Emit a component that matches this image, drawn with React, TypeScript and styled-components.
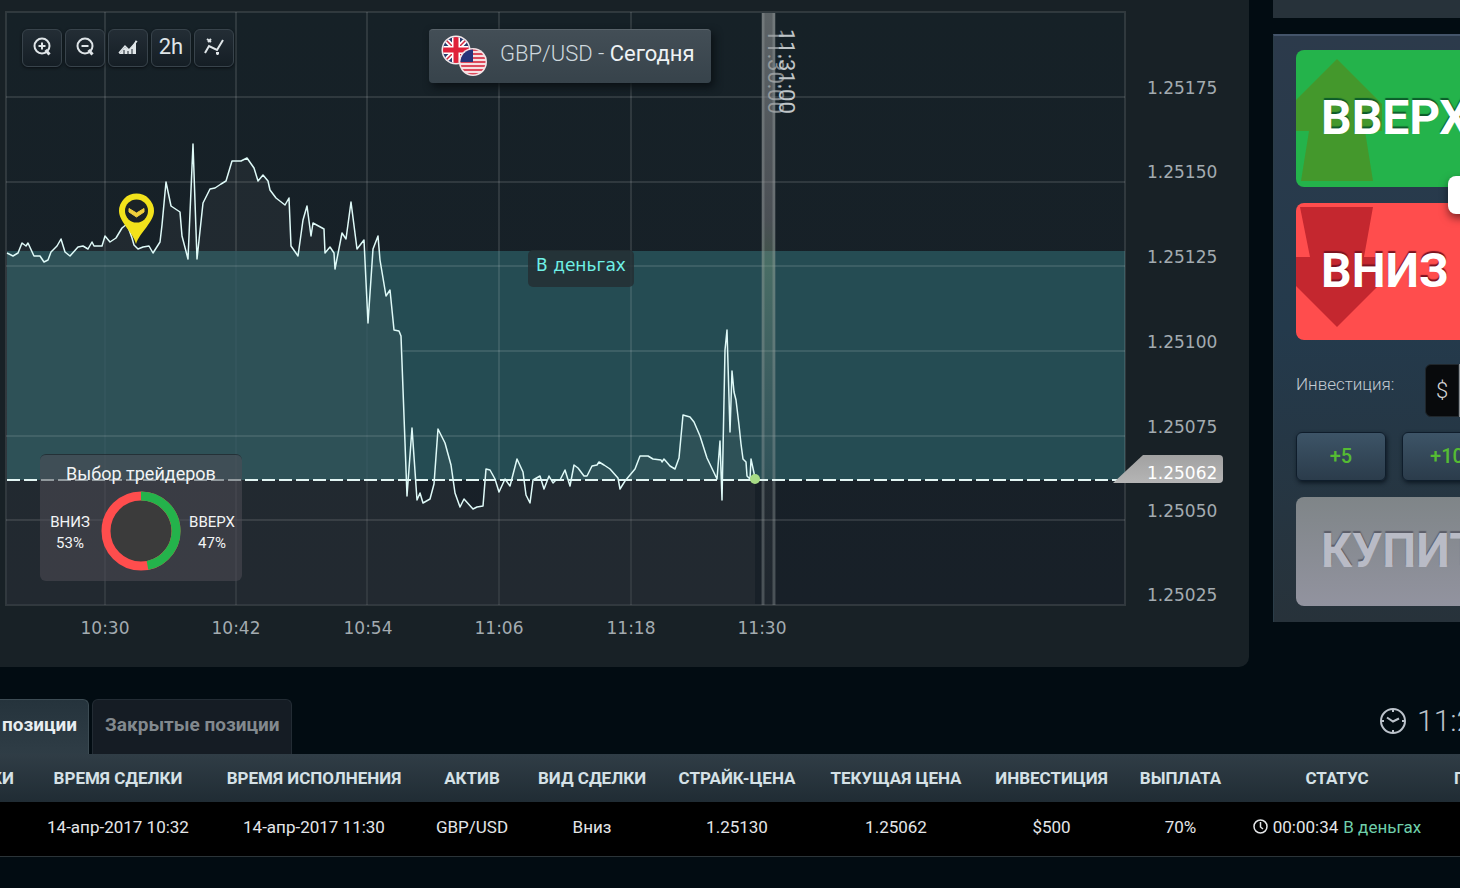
import React from "react";
import styled, { createGlobalStyle, css } from "styled-components";

const GlobalStyle = createGlobalStyle`
  *, *::before, *::after { box-sizing: border-box; }
  body {
    margin: 0;
    background: #020c12;
    color: #e6eaec;
    font-family: Roboto, "Liberation Sans", sans-serif;
    overflow-x: hidden;
  }
  button, input { font: inherit; color: inherit; }
`;

const Page = styled.div`
  min-height: 100vh;
  overflow: hidden;
`;

const TopArea = styled.div`
  display: flex;
  align-items: flex-start;
  gap: 24px;
`;

const ChartPanel = styled.section`
  position: relative;
  flex: 1;
  min-width: 0;
  background: #182126;
  border-radius: 0 0 10px 0;
`;

const ChartSvg = styled.svg`
  display: block;
  width: 100%;
  height: auto;
`;

const Toolbar = styled.div`
  position: absolute;
  top: 29px;
  left: 22px;
  display: flex;
  gap: 3px;
`;

const ToolButton = styled.button`
  display: flex;
  align-items: center;
  justify-content: center;
  width: 40px;
  height: 38px;
  padding: 0 0 2px;
  border: 1px solid #38434b;
  border-radius: 6px;
  background: linear-gradient(#232d35, #151e25);
  box-shadow: 0 1px 3px #0a0f13;
  color: #dfe5e8;
  font-size: 22px;
  line-height: 24px;
`;

const AssetTitle = styled.h1`
  position: absolute;
  top: 29px;
  left: 429px;
  display: flex;
  align-items: center;
  gap: 11px;
  height: 54px;
  margin: 0;
  padding: 0 16px 4px 12px;
  border-radius: 4px;
  border-top: 1px solid #59636a;
  background: linear-gradient(#434e56, #37434b);
  box-shadow: 3px 4px 8px #0a1014;
  font-size: 22px;
  line-height: 26px;
  font-weight: 400;
  color: #eef2f4;
  white-space: nowrap;
`;

const AssetText = styled.span`
  padding-bottom: 2px;
`;

const AssetPair = styled.span`
  font-weight: 300;
  color: #ced8de;
`;

const TradersCard = styled.section`
  position: absolute;
  top: 454px;
  left: 40px;
  width: 202px;
  height: 127px;
  padding: 8px 5px;
  border-radius: 6px;
  background: rgba(78, 76, 86, 0.55);
  border-top: 1px solid rgba(10, 20, 25, 0.5);
  color: #f2f4f5;
  text-align: center;
`;

const CardTitle = styled.h2`
  margin: 0;
  font-size: 18px;
  line-height: 22px;
  font-weight: 400;
`;

const TradersRow = styled.div`
  display: flex;
  align-items: center;
  justify-content: space-between;
  margin-top: 6px;
`;

const Share = styled.div`
  width: 50px;
  padding-top: 4px;
  font-size: 15px;
  line-height: 21px;
  text-align: center;
`;

const Sidebar = styled.aside`
  flex: 0 0 187px;
  overflow: hidden;
`;

const PanelStub = styled.div`
  width: 320px;
  height: 18px;
  margin-bottom: 16px;
  background: #27323a;
`;

const TradePanel = styled.form`
  position: relative;
  display: flex;
  flex-direction: column;
  gap: 16px;
  width: 320px;
  padding: 14px 22px 16px;
  border-top: 2px solid #44546a;
  border-left: 1px solid #2b3d48;
  background: linear-gradient(#2c3a4b, #243a4c 50%, #27323a);
`;

const BigButton = styled.button<{ $kind: "up" | "down" | "buy" }>`
  position: relative;
  overflow: hidden;
  width: 100%;
  height: 137px;
  padding: 0 0 1px 25px;
  border: 0;
  border-radius: 8px;
  text-align: left;
  font-size: 48px;
  line-height: 56px;
  font-weight: 700;
  color: #fff;
  ${(p) =>
    p.$kind === "up" &&
    css`
      background: #24b34b;
      text-shadow: 0 -2px 1px #0c5a2a;
    `}
  ${(p) =>
    p.$kind === "down" &&
    css`
      background: #ff4d4d;
      text-shadow: 0 -2px 1px #7a1220;
    `}
  ${(p) =>
    p.$kind === "buy" &&
    css`
      height: 109px;
      background: linear-gradient(#7f8588, #92939f);
      color: #b9bbc6;
      text-shadow: 0 -2px 1px #5b5d68;
    `}
`;

const ArrowArt = styled.svg`
  position: absolute;
  top: 0;
  left: 0;
`;

const ButtonLabel = styled.span`
  position: relative;
`;

const FloatingBadge = styled.span`
  position: absolute;
  top: 140px;
  left: 174px;
  width: 40px;
  height: 38px;
  border-radius: 8px;
  background: #fff;
  box-shadow: 0 4px 8px rgba(0, 0, 0, 0.5);
`;

const InvestRow = styled.div`
  display: flex;
  height: 53px;
  margin-top: 8px;
`;

const InvestLabel = styled.label`
  flex: 0 0 129px;
  padding-top: 9px;
  font-size: 17px;
  line-height: 22px;
  font-weight: 300;
  color: #c3cbd2;
`;

const Currency = styled.span`
  display: flex;
  align-items: center;
  justify-content: center;
  width: 34px;
  border-radius: 6px 0 0 6px;
  border: 1px solid #20272c;
  background: #080a0c;
  font-size: 22px;
  font-weight: 300;
  color: #d5d5d5;
`;

const AmountInput = styled.input`
  flex: 1;
  min-width: 0;
  padding: 0 8px;
  border: 0;
  border-radius: 0 6px 6px 0;
  background: #8b8f92;
`;

const StepRow = styled.div`
  display: flex;
  gap: 16px;
  margin-top: -1px;
`;

const StepButton = styled.button`
  width: 90px;
  height: 49px;
  padding: 0 0 2px;
  border: 1px solid #0f1d2b;
  border-radius: 6px;
  background: linear-gradient(#3d5467, #2b3c4b);
  box-shadow: 1px 2px 4px #0d1822;
  font-size: 20px;
  line-height: 24px;
  font-weight: 500;
  color: #55bb33;
`;

const Positions = styled.section`
  margin-top: 32px;
`;

const TabBar = styled.div`
  display: flex;
  align-items: flex-start;
  gap: 3px;
`;

const Tab = styled.button<{ $active?: boolean; $cut?: boolean }>`
  height: 55px;
  padding: 0 11px 5px ${(p) => (p.$cut ? "2px" : "12px")};
  border: 1px solid ${(p) => (p.$active ? "#3d4c54" : "#232c34")};
  border-width: 1px 1px 0 ${(p) => (p.$cut ? "0" : "1px")};
  border-radius: ${(p) => (p.$cut ? "0 6px 0 0" : "6px 6px 0 0")};
  background: ${(p) => (p.$active ? "linear-gradient(#25333c, #2f3d46)" : "#151c24")};
  color: ${(p) => (p.$active ? "#e8edf0" : "#82898e")};
  font-size: 19px;
  line-height: 24px;
  font-weight: 700;
  white-space: nowrap;
`;

const Clock = styled.time`
  display: flex;
  align-items: center;
  gap: 11px;
  width: 80px;
  height: 44px;
  margin-left: auto;
  overflow: hidden;
  font-size: 30px;
  line-height: 36px;
  font-weight: 300;
  color: #bcc3cb;
  white-space: nowrap;

  svg { flex: none; }
`;

const PositionsTable = styled.table`
  width: 100%;
  table-layout: fixed;
  border-collapse: collapse;
  text-align: center;
  white-space: nowrap;

  thead tr {
    height: 48px;
    background: linear-gradient(#303d46, #202c34);
  }
  tbody tr {
    height: 54px;
    background: #000;
    border-bottom: 1px solid #2b3438;
  }
  th, td { padding: 0; overflow: hidden; }
  th {
    font-size: 17px;
    line-height: 20px;
    font-weight: 700;
    color: #d5e1e6;
  }
  th:first-child {
    direction: rtl;
    text-align: right;
  }
  th:last-child { text-align: left; padding-left: 2px; }
  td {
    padding-bottom: 4px;
    font-size: 17px;
    line-height: 20px;
    color: #e4e6e8;
  }
`;

const Status = styled.span`
  display: inline-flex;
  align-items: center;
  gap: 5px;
  vertical-align: bottom;
`;

const InMoney = styled.span`
  color: #6fcfab;
`;

const gridX = [105, 236, 367, 499, 631];
const gridY = [97, 182, 266, 351, 436, 520];
const priceLabels: [string, number][] = [
  ["1.25175", 94],
  ["1.25150", 178],
  ["1.25125", 263],
  ["1.25100", 348],
  ["1.25075", 433],
  ["1.25050", 517],
  ["1.25025", 601],
];
const timeLabels: [string, number][] = [
  ["10:30", 105],
  ["10:42", 236],
  ["10:54", 368],
  ["11:06", 499],
  ["11:18", 631],
  ["11:30", 762],
];

const quotes =
  "7,253 13,256 18,253 22,243 26,246 28,243 34,256 40,256 44,262 48,260 51,252 57,246 61,239 65,252 70,256 78,247 83,246 88,249 92,242 94,246 102,246 105,236 110,242 116,238 122,228 127,224 132,238 134,245 138,249 143,247 149,246 153,253 160,242 162,225 166,182 171,206 180,212 182,236 188,259 193,144 197,259 203,203 210,189 215,188 221,184 226,181 232,161 241,161 247,158 254,168 258,181 263,175 268,181 270,190 276,198 285,205 289,198 291,246 298,256 303,220 307,206 311,236 313,223 324,229 325,253 330,247 334,253 335,269 342,233 346,239 351,202 357,249 364,240 368,323 373,249 378,236 380,260 386,296 390,290 394,330 399,331 401,336 407,496 412,428 417,500 420,493 423,503 430,499 434,484 438,429 445,443 451,465 455,493 460,507 464,499 473,509 477,507 483,506 486,469 490,470 495,479 499,492 505,479 510,486 517,459 523,472 526,495 530,503 533,480 540,476 544,489 549,476 553,483 556,480 560,480 565,470 570,486 574,465 578,468 584,476 587,476 592,466 597,465 599,462 604,465 610,469 618,478 620,489 625,481 635,469 640,456 648,456 653,459 661,460 662,462 664,459 670,466 675,469 679,458 683,415 690,417 694,422 700,436 707,458 717,479 720,441 722,500 725,350 727,330 730,432 732,371 734,392 736,400 739,425 741,444 743,459 746,462 747,476 750,479 751,459 754,473 755,479";

function PriceChart() {
  return (
    <ChartSvg viewBox="0 0 1249 667" role="img" aria-label="GBP/USD">
      <defs>
        <linearGradient id="expiryFill" x1="0" y1="0" x2="0" y2="1">
          <stop offset="0" stopColor="#8b8f90" stopOpacity="0.6" />
          <stop offset="0.35" stopColor="#8b8a8e" stopOpacity="0.45" />
          <stop offset="0.42" stopColor="#7fa080" stopOpacity="0.4" />
          <stop offset="0.8" stopColor="#8b8f90" stopOpacity="0.1" />
          <stop offset="1" stopColor="#8b8f90" stopOpacity="0.06" />
        </linearGradient>
        <linearGradient id="plotFill" x1="0" y1="0" x2="0" y2="1">
          <stop offset="0" stopColor="#162127" />
          <stop offset="1" stopColor="#182028" />
        </linearGradient>
        <linearGradient id="tagFill" x1="0" y1="0" x2="0" y2="1">
          <stop offset="0" stopColor="#a1a1a1" />
          <stop offset="1" stopColor="#b5b5b5" />
        </linearGradient>
      </defs>
      <rect x="6" y="12" width="1119" height="593" fill="url(#plotFill)" />
      <rect x="7" y="251" width="1118" height="229" fill="#254c53" />
      <g stroke="#ffffff" strokeOpacity="0.11" strokeWidth="2">
        {gridX.map((x) => (
          <line key={x} x1={x} x2={x} y1="12" y2="251" />
        ))}
        {gridX.map((x) => (
          <line key={x} x1={x} x2={x} y1="480" y2="605" strokeOpacity="0.08" />
        ))}
        {gridX.map((x) => (
          <line key={x} x1={x} x2={x} y1="251" y2="480" strokeOpacity={x < 400 ? 0.03 : 0.1} />
        ))}
        {gridY.map((y) => (
          <line key={y} x1={y === 351 ? 403 : 6} x2="1125" y1={y} y2={y} />
        ))}
        <rect x="6" y="12" width="1119" height="593" fill="none" />
      </g>
      <polygon points={`7,604 ${quotes} 755,604`} fill="#7c7c84" fillOpacity="0.1" />
      <rect x="762" y="13" width="13" height="592" fill="url(#expiryFill)" />
      <path d="M763 13V605M774 13V605" stroke="#9aa2a4" strokeOpacity="0.35" strokeWidth="3" />
      <g fontFamily="Roboto, sans-serif" fontSize="22">
        <text transform="translate(768 29) rotate(90)" fill="#a9adaf" fillOpacity="0.75">11:30:00</text>
        <text transform="translate(779 29) rotate(90)" fill="#c0c6c9">11:31:00</text>
      </g>
      <line x1="7" x2="1120" y1="480" y2="480" stroke="#e2f5f3" strokeWidth="2" strokeDasharray="13 4" />
      <polyline points={quotes} fill="none" stroke="#dffaf8" strokeWidth="1.5" strokeLinejoin="round" />
      <circle cx="755" cy="479" r="5" fill="#a8dc86" />
      <path d="M136 244C133 232 119 222 119 211a17.500 17.500 0 0 1 35 0C154 222 140 232 136 244Z" fill="#f2e21b" />
      <circle cx="136.500" cy="211" r="11.500" fill="#1b2226" />
      <path d="M129 208.500l7.500 4.500 7.500-4.500v3.500l-7.500 5-7.500-5Z" fill="#f0cf3c" stroke="#f0cf3c" strokeLinejoin="round" />
      <rect x="528" y="250" width="106" height="37" rx="5" fill="#252f34" fillOpacity="0.85" />
      <text x="581" y="271" textAnchor="middle" fontFamily="'DejaVu Sans', sans-serif" fontSize="17" fill="#6ff0e6">В деньгах</text>
      <path d="M1113 483L1143 455H1219a4 4 0 0 1 4 4V479a4 4 0 0 1-4 4Z" fill="url(#tagFill)" />
      <g fontFamily="'DejaVu Sans', sans-serif" fontSize="17" fill="#a3abb0">
        {priceLabels.map(([label, y]) => (
          <text key={label} x="1147" y={y}>{label}</text>
        ))}
        <text x="1147" y="479" fill="#ffffff">1.25062</text>
        <g textAnchor="middle">
          {timeLabels.map(([label, x]) => (
            <text key={label} x={x} y="634">{label}</text>
          ))}
        </g>
      </g>
    </ChartSvg>
  );
}

function ZoomIcon({ plus }: { plus?: boolean }) {
  return (
    <svg width="20" height="20" viewBox="0 0 20 20" fill="none" stroke="currentColor" strokeWidth="2">
      <circle cx="10" cy="9" r="7.500" />
      <path d={plus ? "M6.500 9h7M10 5.500v7" : "M6.500 9h7"} />
      <path d="M13.500 13l4 4.500" strokeWidth="3" />
    </svg>
  );
}

function AreaIcon() {
  return (
    <svg width="20" height="20" viewBox="0 0 20 20" fill="currentColor">
      <path d="M1 17l6-7 4 3 3-3 4-7v14Z" />
      <path d="M1 16l6-7 4 4 8-9" fill="none" stroke="currentColor" strokeWidth="1.500" />
      <path d="M6 13v4M10 14v3M14 12v5" stroke="#1b252c" strokeWidth="1" />
    </svg>
  );
}

function TrendIcon() {
  return (
    <svg width="22" height="20" viewBox="0 0 22 20" fill="none" stroke="currentColor" strokeWidth="2">
      <path d="M2 16l4-7 8 4 6-10" />
      <path d="M4 2l4 3M8 2L5 5M13 16h3M14.500 15v3" />
    </svg>
  );
}

function FlagPair() {
  return (
    <svg width="48" height="42" viewBox="0 0 48 42" aria-hidden="true">
      <clipPath id="ukClip"><circle cx="15" cy="16" r="13" /></clipPath>
      <clipPath id="usClip"><circle cx="32" cy="28" r="12.500" /></clipPath>
      <circle cx="15" cy="16" r="14.500" fill="#f3e9ec" />
      <g clipPath="url(#ukClip)">
        <rect y="1" width="30" height="30" fill="#283a6c" />
        <path d="M2 3l26 26M28 3L2 29" stroke="#fff" strokeWidth="5" />
        <path d="M2 3l26 26M28 3L2 29" stroke="#d52a40" strokeWidth="1.500" />
        <path d="M15 1v30M0 16h30" stroke="#fff" strokeWidth="8" />
        <path d="M15 1v30M0 16h30" stroke="#e0213a" strokeWidth="5" />
      </g>
      <circle cx="32" cy="28" r="14" fill="#f3e3e6" />
      <g clipPath="url(#usClip)">
        <rect x="18" y="14" width="28" height="28" fill="#f6dfe1" />
        <path d="M18 16h28M18 20h28M18 24h28M18 28h28M18 32h28M18 36h28M18 40h28" stroke="#dc4a5c" strokeWidth="2" />
        <rect x="18" y="14" width="14" height="14" fill="#26337a" />
      </g>
    </svg>
  );
}

function Donut() {
  return (
    <svg width="80" height="80" viewBox="0 0 80 80" aria-hidden="true">
      <circle cx="40" cy="40" r="35" fill="#3b3b3b" />
      <circle cx="40" cy="40" r="35" fill="none" stroke="#ff4d4d" strokeWidth="9" />
      <path d="M40 5A35 35 0 0 1 46.500 74.400" fill="none" stroke="#24b34b" strokeWidth="9" />
    </svg>
  );
}

const columns: [string, number, string][] = [
  ["КИ", 14, ""],
  ["ВРЕМЯ СДЕЛКИ", 208, "14-апр-2017 10:32"],
  ["ВРЕМЯ ИСПОЛНЕНИЯ", 184, "14-апр-2017 11:30"],
  ["АКТИВ", 132, "GBP/USD"],
  ["ВИД СДЕЛКИ", 108, "Вниз"],
  ["СТРАЙК-ЦЕНА", 182, "1.25130"],
  ["ТЕКУЩАЯ ЦЕНА", 136, "1.25062"],
  ["ИНВЕСТИЦИЯ", 175, "$500"],
  ["ВЫПЛАТА", 83, "70%"],
  ["СТАТУС", 230, "status"],
  ["П", 8, ""],
];

export default function App() {
  return (
    <Page>
      <GlobalStyle />
      <TopArea>
        <ChartPanel>
          <PriceChart />
          <Toolbar>
            <ToolButton type="button" aria-label="Увеличить"><ZoomIcon plus /></ToolButton>
            <ToolButton type="button" aria-label="Уменьшить"><ZoomIcon /></ToolButton>
            <ToolButton type="button" aria-label="Тип графика"><AreaIcon /></ToolButton>
            <ToolButton type="button">2h</ToolButton>
            <ToolButton type="button" aria-label="Индикаторы"><TrendIcon /></ToolButton>
          </Toolbar>
          <AssetTitle>
            <FlagPair />
            <AssetText><AssetPair>GBP/USD - </AssetPair>Сегодня</AssetText>
          </AssetTitle>
          <TradersCard>
            <CardTitle>Выбор трейдеров</CardTitle>
            <TradersRow>
              <Share>ВНИЗ<br />53%</Share>
              <Donut />
              <Share>ВВЕРХ<br />47%</Share>
            </TradersRow>
          </TradersCard>
        </ChartPanel>
        <Sidebar>
          <PanelStub />
          <TradePanel>
            <BigButton type="button" $kind="up">
              <ArrowArt width="90" height="137" viewBox="0 0 90 137">
                <path d="M41 9L-4 54V81H13L5 131H77L69 81H86V54Z" fill="#44982c" />
              </ArrowArt>
              <ButtonLabel>ВВЕРХ</ButtonLabel>
            </BigButton>
            <BigButton type="button" $kind="down">
              <ArrowArt width="90" height="137" viewBox="0 0 90 137">
                <path d="M41 124L-4 79V54H14L4 4H77L68 54H86V79Z" fill="#c4272f" />
              </ArrowArt>
              <ButtonLabel>ВНИЗ</ButtonLabel>
            </BigButton>
            <FloatingBadge />
            <InvestRow>
              <InvestLabel htmlFor="amount">Инвестиция:</InvestLabel>
              <Currency>$</Currency>
              <AmountInput id="amount" type="text" />
            </InvestRow>
            <StepRow>
              <StepButton type="button">+5</StepButton>
              <StepButton type="button">+10</StepButton>
            </StepRow>
            <BigButton type="button" $kind="buy">КУПИТЬ</BigButton>
          </TradePanel>
        </Sidebar>
      </TopArea>
      <Positions>
        <TabBar>
          <Tab type="button" $active $cut>позиции</Tab>
          <Tab type="button">Закрытые позиции</Tab>
          <Clock>
            <svg width="26" height="26" viewBox="0 0 26 26" fill="none" stroke="currentColor" strokeWidth="2">
              <circle cx="13" cy="13" r="12" />
              <path d="M13 1v3M13 22v3M1 13h3M22 13h3" />
              <path d="M7 9.500l6 4 6-3" />
            </svg>
            11:29:26
          </Clock>
        </TabBar>
        <PositionsTable>
          <colgroup>
            {columns.map(([name, width]) => (
              <col key={name} style={{ width }} />
            ))}
          </colgroup>
          <thead>
            <tr>
              {columns.map(([name]) => (
                <th key={name} scope="col">{name}</th>
              ))}
            </tr>
          </thead>
          <tbody>
            <tr>
              {columns.map(([name, , value]) => (
                <td key={name}>
                  {value === "status" ? (
                    <Status>
                      <svg width="15" height="15" viewBox="0 0 15 15" fill="none" stroke="currentColor" strokeWidth="1.500">
                        <circle cx="7.500" cy="7.500" r="6.500" />
                        <path d="M7.500 3v5l2.500 2" />
                      </svg>
                      00:00:34 <InMoney>В деньгах</InMoney>
                    </Status>
                  ) : (
                    value
                  )}
                </td>
              ))}
            </tr>
          </tbody>
        </PositionsTable>
      </Positions>
    </Page>
  );
}
